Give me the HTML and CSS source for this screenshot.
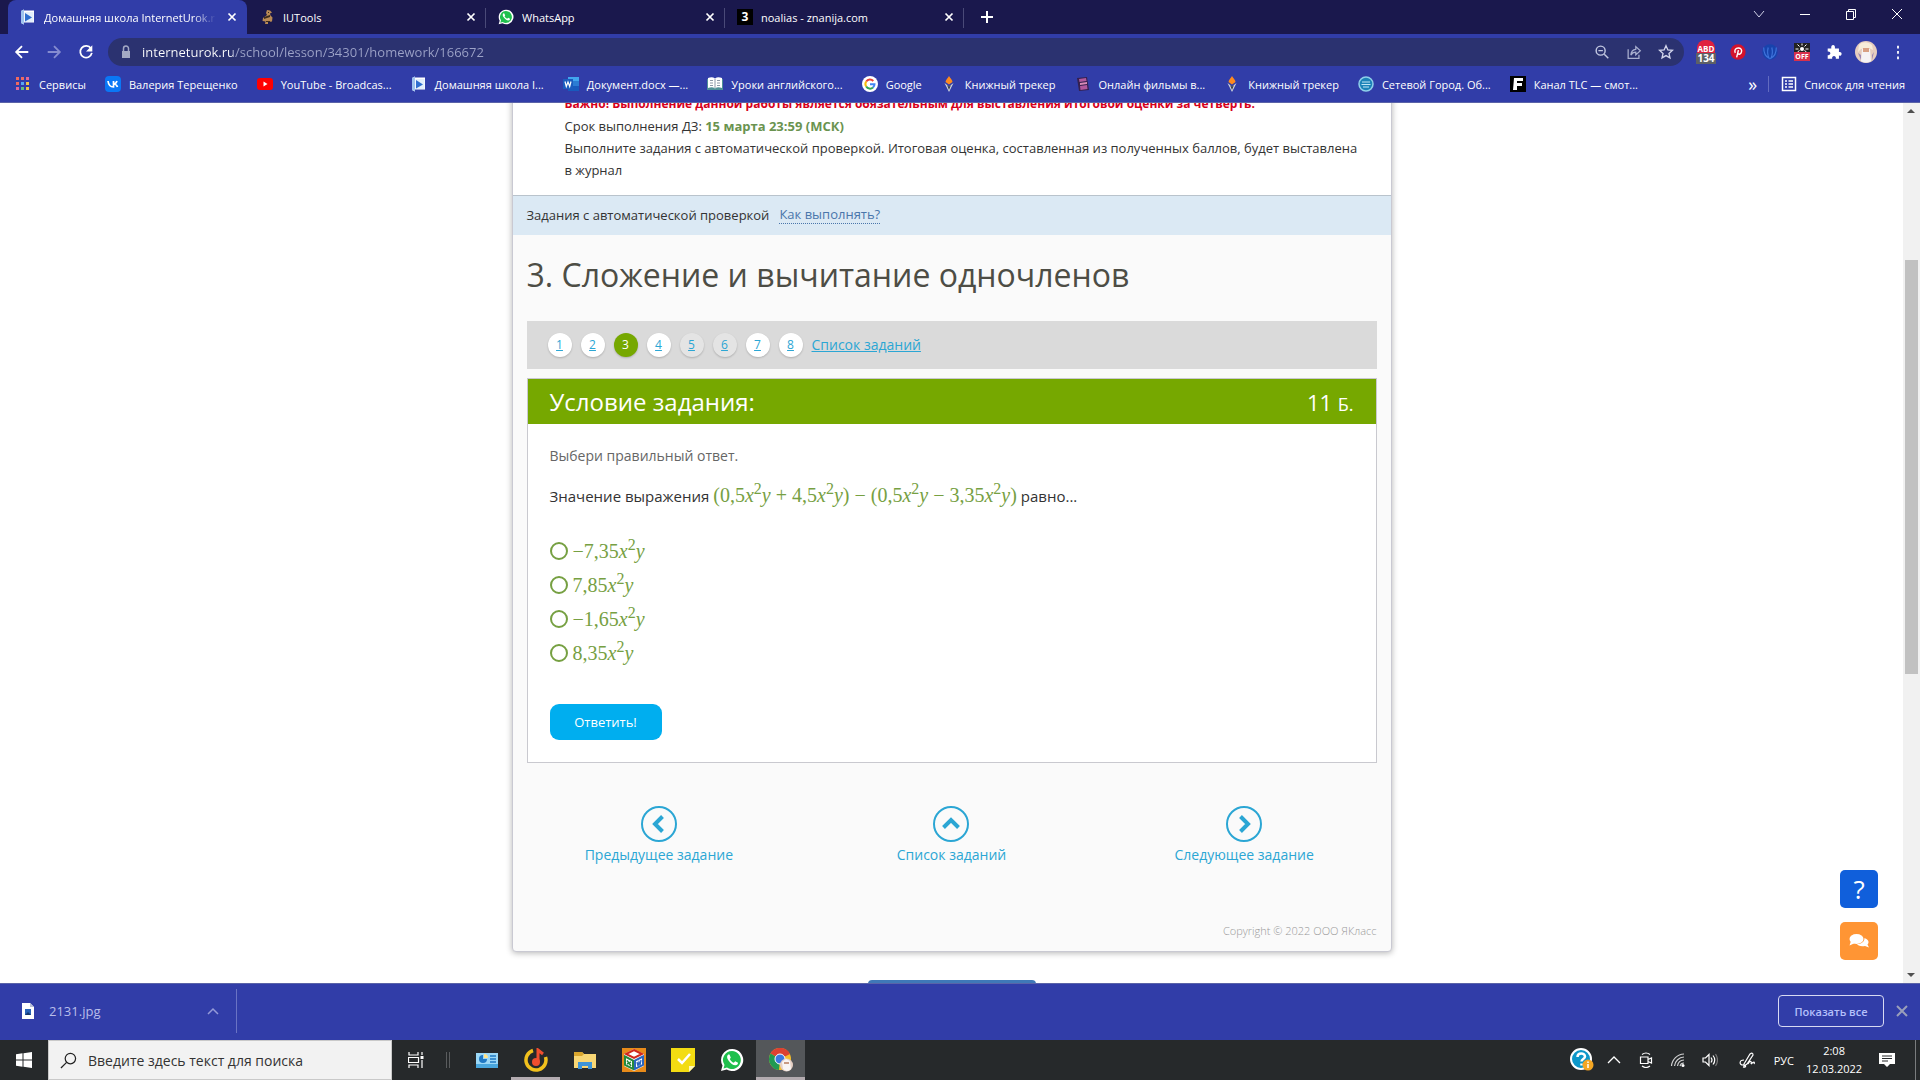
FILE: index.html
```html
<!DOCTYPE html>
<html lang="ru">
<head>
    <meta charset="UTF-8">
    <meta name="viewport" content="width=device-width, initial-scale=1.0">
    <title>Домашняя школа InternetUrok.ru</title>
    <link rel="stylesheet" href="styles.css">
</head>
<body>

    <!-- shared icons -->
    <svg class="sprite" aria-hidden="true">
        <symbol id="i-school" viewBox="0 0 16 16"><path d="M1 2l3-1.500v1h10v12H4v2l-3-1.500z" fill="#fff"/><path d="M4.500 3h9v10h-9z" fill="#e3eefb"/><path d="M5 4l7 4.500L5 12.500z" fill="#2f6fd0"/><path d="M1 2l3-1.500v15L1 14z" fill="#9fc3ee"/></symbol>
        <symbol id="i-x" viewBox="0 0 16 16"><path d="M4.500 4.500l7 7m0-7l-7 7" stroke="currentColor" stroke-width="1.700" fill="none"/></symbol>
        <symbol id="i-wa" viewBox="0 0 24 24"><path d="M12 1a11 11 0 0 0-9.500 16.500L1 23l5.700-1.500A11 11 0 1 0 12 1z" fill="#fff"/><path d="M12 3a9 9 0 0 0-7.500 14l-1 3.500L7 19.600A9 9 0 1 0 12 3z" fill="#1fc04d"/><path d="M8.200 6.500c-1.600 1.300-1.500 3.600.3 6 2.100 2.900 4.300 4.700 7 4.800 1.500 0 2.600-1.100 2.500-2.500l-2.800-1.500-1.400 1.500c-1.800-.7-3.200-2-4-3.800l1-1.300-1.300-3.100z" fill="#fff"/></symbol>
        <symbol id="i-torch" viewBox="0 0 16 16"><path d="M8 0c1 2 3.500 4 3.500 6L8 8.500 4.500 6C4.500 4 7 2 8 0z" fill="#ff8a1e"/><path d="M3.500 7L8 10.500 12.500 7 8 16z" fill="#cfd4dc"/><path d="M6 9l2 1.500L10 9l-2 5z" fill="#3a3f4c"/></symbol>
    </svg>

    <header class="browser">
        <div class="tabs">
            <div class="tab active">
                <svg class="ico"><use href="#i-school"/></svg>
                <span class="tab-title">Домашняя школа InternetUrok.r</span>
                <button class="tab-close" aria-label="Закрыть"><svg class="ico"><use href="#i-x"/></svg></button>
            </div>
            <div class="tab">
                <svg class="ico" viewBox="0 0 16 16"><path d="M8 1l3 .500 2 2-2 1 .500 2 2 2-.500 4-4 .500V15H6l.500-2.500-3-.500.500-3 4-3L7 4z" fill="#b98a55"/><path d="M5 8l6-2v2L5 10zm2 4h4v1H7zM9 3h1v1H9z" fill="#3c2b1c"/></svg>
                <span class="tab-title">IUTools</span>
                <button class="tab-close" aria-label="Закрыть"><svg class="ico"><use href="#i-x"/></svg></button>
            </div>
            <div class="tab">
                <svg class="ico"><use href="#i-wa"/></svg>
                <span class="tab-title">WhatsApp</span>
                <button class="tab-close" aria-label="Закрыть"><svg class="ico"><use href="#i-x"/></svg></button>
            </div>
            <div class="tab">
                <span class="ico znanija">3</span>
                <span class="tab-title">noalias - znanija.com</span>
                <button class="tab-close" aria-label="Закрыть"><svg class="ico"><use href="#i-x"/></svg></button>
            </div>
            <button class="new-tab" aria-label="Новая вкладка"><svg class="ico" viewBox="0 0 16 16"><path d="M8 2v12M2 8h12" stroke="#fff" stroke-width="2"/></svg></button>
            <div class="window-buttons">
                <button aria-label="Поиск вкладок"><svg class="ico" viewBox="0 0 16 16"><path d="M3 5l5 6 5-6" fill="none" stroke="#cfd0e6"/></svg></button>
                <button aria-label="Свернуть"><svg class="ico" viewBox="0 0 16 16"><path d="M3 8.500h10" stroke="#fff"/></svg></button>
                <button aria-label="Развернуть"><svg class="ico" viewBox="0 0 16 16"><path d="M3.500 5.500h7v8h-7zM5.500 5.500v-2h7v8h-2" fill="none" stroke="#fff"/></svg></button>
                <button aria-label="Закрыть окно"><svg class="ico" viewBox="0 0 16 16"><path d="M3 3l10 10m0-10L3 13" stroke="#fff" fill="none"/></svg></button>
            </div>
        </div>

        <div class="toolbar">
            <button class="tool" aria-label="Назад"><svg viewBox="0 0 20 20"><path d="M17 10H4m6-6.500L3.500 10l6.500 6.500" fill="none" stroke="#fff" stroke-width="2"/></svg></button>
            <button class="tool" aria-label="Вперёд"><svg viewBox="0 0 20 20"><path d="M3 10h13m-6-6.500l6.500 6.500-6.500 6.500" fill="none" stroke="#858cd0" stroke-width="2"/></svg></button>
            <button class="tool" aria-label="Обновить"><svg viewBox="0 0 20 20"><path d="M15.500 6A6.500 6.500 0 1 0 16.500 11" fill="none" stroke="#fff" stroke-width="2"/><path d="M17 2.500v7h-7z" fill="#fff"/></svg></button>
            <div class="omnibox">
                <svg class="ico lock" viewBox="0 0 16 16"><path d="M4 7h8v7H4z" fill="#a3a9c4"/><path d="M5.500 7V4.500a2.500 2.500 0 0 1 5 0V7" fill="none" stroke="#a3a9c4" stroke-width="1.500"/></svg>
                <input type="text" class="url" aria-label="Адрес" value="interneturok.ru/school/lesson/34301/homework/166672">
                <button class="tool" aria-label="Масштаб"><svg viewBox="0 0 20 20"><circle cx="8.500" cy="8.500" r="5" fill="none" stroke="#c3c8e2" stroke-width="1.600"/><path d="M12.500 12.500L17 17M6 8.500h5" stroke="#c3c8e2" stroke-width="1.600"/></svg></button>
                <button class="tool" aria-label="Поделиться"><svg viewBox="0 0 20 20"><path d="M3.500 7v10h12v-4" fill="none" stroke="#a9afcf" stroke-width="1.400"/><path d="M6.500 13.500c.3-4 2.500-6.200 5.500-6.500V4l5 4.700-5 4.500v-3c-2.500 0-4.300 1-5.500 3.300z" fill="none" stroke="#a9afcf" stroke-width="1.400"/></svg></button>
                <button class="tool" aria-label="В закладки"><svg viewBox="0 0 20 20"><path d="M10 3l2.100 4.700 5 .5-3.800 3.400 1.100 5L10 14l-4.400 2.600 1.100-5-3.800-3.400 5-.5z" fill="none" stroke="#d3d6ec" stroke-width="1.500"/></svg></button>
            </div>
            <div class="extensions">
                <button class="tool abd" aria-label="Блокировщик"><span>ABD</span><b>134</b></button>
                <button class="tool" aria-label="Pinterest"><svg viewBox="0 0 20 20"><circle cx="10" cy="10" r="8.500" fill="#d3122b"/><path d="M8.500 16l2-8M7 11C5.500 8 7.500 5.500 10.300 5.500s4.200 2 3.600 4.400c-.6 2.500-2.900 3.100-4.100 1.800" fill="none" stroke="#fff" stroke-width="1.600"/></svg></button>
                <button class="tool" aria-label="VPN"><svg viewBox="0 0 20 20"><circle cx="10" cy="10" r="8.500" fill="#1743ad"/><path d="M3 5c0 6 2 10 6 12-2-4-2-8-1-12M17 5c0 6-2 10-6 12 2-4 2-8 1-12" fill="none" stroke="#3f74dc" stroke-width="1.300"/></svg></button>
                <button class="tool sun-off" aria-label="Тёмный режим"><svg viewBox="0 0 16 9"><path d="M8 .500v2M3.500 1.500l2 2m7-2l-2 2M1.500 6h3m7 0h3M3.500 9l2-1.500m7 1.500l-2-1.500" stroke="#fff"/><circle cx="8" cy="6" r="2" fill="#fff"/></svg><b>OFF</b></button>
                <button class="tool" aria-label="Расширения"><svg viewBox="0 0 20 20"><path d="M3 6h4c-1-5 5-5 4 0h4.500v4c4-1 4 5 0 4v3.500H12c1-4-5-4-4 0H3v-4c4 .500 4-4.500 0-4z" fill="#fff"/></svg></button>
                <button class="tool" aria-label="Профиль"><svg class="avatar" viewBox="0 0 22 22"><circle cx="11" cy="11" r="11" fill="#e6cdbf"/><path d="M4 4c4-4 9-3 13 0l1 5-4-2-8 1-3 3z" fill="#f7edd9"/><path d="M7 8h8l1 12c-3 2-7 2-10 0z" fill="#f5f2f4"/><path d="M8 7h6v4H8z" fill="#d8a083"/><path d="M3 12l3 2v5zm16-1l-2 3v5z" fill="#9a86b4"/></svg></button>
                <button class="tool" aria-label="Меню"><svg viewBox="0 0 20 20"><path d="M9 3h2v3H9zm0 6h2v3H9zm0 6h2v3H9z" fill="#fff"/></svg></button>
            </div>
        </div>

        <nav class="bookmarks">
            <a href="#"><svg class="ico" viewBox="0 0 16 16"><path d="M1 1h3v3H1zm5 0h3v3H6zM1 6h3v3H1z" fill="#f06a5e"/><path d="M11 1h3v3h-3zM1 11h3v3H1z" fill="#e2679a"/><path d="M6 6h3v3H6z" fill="#58a6f2"/><path d="M11 6h3v3h-3zm0 5h3v3h-3z" fill="#f2c14b"/><path d="M6 11h3v3H6z" fill="#5fbf7f"/></svg><span>Сервисы</span></a>
            <a href="#"><svg class="ico" viewBox="0 0 16 16"><rect width="16" height="16" rx="4" fill="#0a77f6"/><path d="M3 5c.5 4 2.500 6 5.500 6V5m0 3c2 0 3-1.500 3.500-3m-3.500 3c2 0 3.500 1.500 4 3" fill="none" stroke="#fff" stroke-width="1.700"/></svg><span>Валерия Терещенко</span></a>
            <a href="#"><svg class="ico" viewBox="0 0 16 16"><rect y="2" width="16" height="12" rx="3" fill="#f00"/><path d="M6.500 5.500v5l4-2.500z" fill="#fff"/></svg><span>YouTube - Broadcas...</span></a>
            <a href="#"><svg class="ico"><use href="#i-school"/></svg><span>Домашняя школа I...</span></a>
            <a href="#"><svg class="ico" viewBox="0 0 16 16"><path d="M5 1h11v14H5z" fill="#41a5ee"/><path d="M5 5h11v5H5z" fill="#2b7cd3"/><path d="M5 10h11v5H5z" fill="#185abd"/><path d="M0 3h10v10H0z" fill="#1b5cbe"/><path d="M2 5.500l1.300 5L5 6l1.700 4.500L8 5.500" fill="none" stroke="#fff" stroke-width="1.200"/></svg><span>Документ.docx —...</span></a>
            <a href="#"><svg class="ico" viewBox="0 0 16 16"><path d="M0 3h16v11H0z" fill="#4f8f96"/><path d="M1 2c3-1 5-1 7 .500 2-1.500 4-1.500 7-.5v10c-3-1-5-1-7 .500-2-1.500-4-1.500-7-.5z" fill="#fff"/><path d="M8 3v9M3 4.500h3M3 7h3M3 9.500h3m4-5h3M10 7h3m-3 2.500h3" stroke="#8d99a8"/></svg><span>Уроки английского...</span></a>
            <a href="#"><svg class="ico" viewBox="0 0 16 16"><circle cx="8" cy="8" r="8" fill="#fff"/><g fill="none" stroke-width="2"><path d="M4.200 5.500A4.500 4.500 0 0 1 11.300 5" stroke="#ea4335"/><path d="M4.200 5.500a4.500 4.500 0 0 0 0 5" stroke="#fbbc05"/><path d="M4.200 10.500a4.500 4.500 0 0 0 6.800 1" stroke="#34a853"/><path d="M11 11.500a4.500 4.500 0 0 0 1.500-3.300H8" stroke="#4285f4"/></g></svg><span>Google</span></a>
            <a href="#"><svg class="ico"><use href="#i-torch"/></svg><span>Книжный трекер</span></a>
            <a href="#"><svg class="ico" viewBox="0 0 16 16"><path d="M2 2l10-1 2 13-10 1z" fill="#35204f"/><path d="M4 3l7-1 .500 3-7 1zm1 7l7-1 .500 4-7 1z" fill="#b0589d"/><path d="M5 7l7-1v2l-7 1z" fill="#d98bb7"/></svg><span>Онлайн фильмы в...</span></a>
            <a href="#"><svg class="ico"><use href="#i-torch"/></svg><span>Книжный трекер</span></a>
            <a href="#"><svg class="ico" viewBox="0 0 16 16"><circle cx="8" cy="8" r="7" fill="#1c83b8" stroke="#8fd0ea" stroke-width="1.500"/><path d="M4 6h8M3.500 8.500h9M5 11h6" stroke="#bfe6f5"/></svg><span>Сетевой Город. Об...</span></a>
            <a href="#"><svg class="ico" viewBox="0 0 16 16"><path d="M0 0h16v16H0z" fill="#000"/><path d="M4 2h9v3H7v2h5v3H7v4H3z" fill="#fff"/></svg><span>Канал TLC — смот...</span></a>
            <button class="more" aria-label="Ещё">»</button>
            <a href="#" class="reading"><svg class="ico" viewBox="0 0 16 16"><rect x="1.500" y="1.500" width="13" height="13" fill="none" stroke="#fff" stroke-width="1.500"/><path d="M4 5h2m1.500 0H12M4 8h2m1.500 0H12M4 11h2m1.500 0H12" stroke="#fff" stroke-width="1.500"/></svg><span>Список для чтения</span></a>
        </nav>
    </header>

    <main class="viewport">
        <div class="page">
            <article class="card">
                <div class="intro">
                    <p class="important">Важно! Выполнение данной работы является обязательным для выставления итоговой оценки за четверть.</p>
                    <p>Срок выполнения ДЗ: <b>15 марта 23:59 (МСК)</b></p>
                    <p>Выполните задания с автоматической проверкой. Итоговая оценка, составленная из полученных баллов, будет выставлена в&nbsp;журнал</p>
                </div>
                <div class="auto-check">
                    <span>Задания с автоматической проверкой</span>
                    <a href="#">Как выполнять?</a>
                </div>

                <div class="lesson">
                    <h1>3. Сложение и вычитание одночленов</h1>
                    <nav class="steps">
                        <a href="#">1</a>
                        <a href="#">2</a>
                        <a href="#" class="current">3</a>
                        <a href="#">4</a>
                        <a href="#" class="done">5</a>
                        <a href="#" class="done">6</a>
                        <a href="#">7</a>
                        <a href="#">8</a>
                        <a href="#" class="all">Список заданий</a>
                    </nav>

                    <section class="task">
                        <div class="task-head">
                            <h2>Условие задания:</h2>
                            <span>11 <small>Б.</small></span>
                        </div>
                        <form class="task-body" onsubmit="return false">
                            <p class="hint">Выбери правильный ответ.</p>
                            <p class="question">Значение выражения <span class="math">(0,5<i>x</i><sup>2</sup><i>y</i> + 4,5<i>x</i><sup>2</sup><i>y</i>) − (0,5<i>x</i><sup>2</sup><i>y</i> − 3,35<i>x</i><sup>2</sup><i>y</i>)</span> равно...</p>
                            <div class="answers">
                                <label><input type="radio" name="answer"><span class="math">−7,35<i>x</i><sup>2</sup><i>y</i></span></label>
                                <label><input type="radio" name="answer"><span class="math">7,85<i>x</i><sup>2</sup><i>y</i></span></label>
                                <label><input type="radio" name="answer"><span class="math">−1,65<i>x</i><sup>2</sup><i>y</i></span></label>
                                <label><input type="radio" name="answer"><span class="math">8,35<i>x</i><sup>2</sup><i>y</i></span></label>
                            </div>
                            <button class="submit" type="submit">Ответить!</button>
                        </form>
                    </section>
                </div>

                <nav class="pager">
                    <a href="#"><svg viewBox="0 0 36 36"><circle cx="18" cy="18" r="17" fill="none" stroke="#2ba6d4" stroke-width="2"/><path d="M21.500 10.500L14 18l7.500 7.500" fill="none" stroke="#2ba6d4" stroke-width="4"/></svg>Предыдущее задание</a>
                    <a href="#"><svg viewBox="0 0 36 36"><circle cx="18" cy="18" r="17" fill="none" stroke="#2ba6d4" stroke-width="2"/><path d="M10.500 21.500L18 14l7.500 7.500" fill="none" stroke="#2ba6d4" stroke-width="4"/></svg>Список заданий</a>
                    <a href="#"><svg viewBox="0 0 36 36"><circle cx="18" cy="18" r="17" fill="none" stroke="#2ba6d4" stroke-width="2"/><path d="M14.500 10.500L22 18l-7.500 7.500" fill="none" stroke="#2ba6d4" stroke-width="4"/></svg>Следующее задание</a>
                </nav>
                <footer class="copyright">Copyright © 2022 ООО ЯКласс</footer>
            </article>
            <div class="next-button"></div>

            <div class="float-buttons">
                <button class="help" aria-label="Помощь">?</button>
                <button class="chat" aria-label="Чат"><svg viewBox="0 0 20 16"><ellipse cx="7.500" cy="6" rx="7" ry="5" fill="#fff"/><path d="M2 8l-1.500 4.500L6 10z" fill="#fff"/><path d="M15.500 5c5 2 4.500 5 3 6.500l1.500 3-4-1.500c-4 1-7.500-.500-8-2 4 0 7.500-2 7.500-6z" fill="#fff"/></svg></button>
            </div>
        </div>
        <div class="scrollbar">
            <svg viewBox="0 0 16 16"><path d="M4 10l4-4 4 4z" fill="#505050"/></svg>
            <div class="thumb"></div>
            <svg viewBox="0 0 16 16"><path d="M4 6l4 4 4-4z" fill="#505050"/></svg>
        </div>
    </main>

    <div class="downloads">
        <div class="file">
            <svg class="ico" viewBox="0 0 16 16"><path d="M2 0h8l4 4v12H2z" fill="#fff"/><path d="M10 0l4 4h-4z" fill="#b8bfd6"/><path d="M5 6h6v6H5z" fill="#2a64b8"/><path d="M5 12l3-3 3 3z" fill="#17386e"/></svg>
            <span>2131.jpg</span>
            <button aria-label="Действия"><svg class="ico" viewBox="0 0 16 16"><path d="M3 11l5-5 5 5" fill="none" stroke="#959bd8" stroke-width="1.500"/></svg></button>
        </div>
        <button class="show-all">Показать все</button>
        <button class="close-bar" aria-label="Закрыть"><svg class="ico" viewBox="0 0 16 16"><path d="M3 3l10 10m0-10L3 13" stroke="#9a9fba" stroke-width="2"/></svg></button>
    </div>

    <footer class="taskbar">
        <button class="start" aria-label="Пуск"><svg class="ico" viewBox="0 0 16 16"><path d="M0 2.200l6.500-.9v6.200H0zm7.500-1L16 0v7.500H7.500zM0 8.500h6.500v6.200L0 13.800zm7.500 0H16V16l-8.500-1.200z" fill="#fff"/></svg></button>
        <label class="search">
            <svg viewBox="0 0 18 18"><circle cx="11" cy="7" r="5.500" fill="none" stroke="#222" stroke-width="1.300"/><path d="M7 11l-6 6" stroke="#222" stroke-width="1.300"/></svg>
            <input type="text" placeholder="Введите здесь текст для поиска" aria-label="Поиск">
        </label>
        <button class="view" aria-label="Представление задач"><svg class="ico" viewBox="0 0 16 16"><path d="M1 0v3h9V0M1 16v-3h9v3M.500 5.500h10v5H.500zM14 0v3m0 5v8" fill="none" stroke="#fff" stroke-width="1.200"/><path d="M12.500 4h3v3h-3z" fill="#fff"/></svg></button>
        <span class="grip"></span>
        <div class="apps">
            <button aria-label="Панель управления"><svg viewBox="0 0 24 24"><path d="M1 5h22v15H1z" fill="#9bd8f7"/><path d="M1 16h22v4H1z" fill="#4aa7de"/><path d="M8 7v4h4a4 4 0 1 1-4-4z" fill="#1f78c4"/><path d="M9 6a4 4 0 0 1 4 4H9z" fill="#ffe38a"/><path d="M15 8h6m-6 3h6m-6 3h6" stroke="#1f78c4" stroke-width="1.500"/></svg></button>
            <button class="running" aria-label="Музыка"><svg viewBox="0 0 24 24"><path d="M9 2.500A10 10 0 1 0 21.500 9" fill="none" stroke="#f2c11d" stroke-width="3.500"/><circle cx="12" cy="14" r="4" fill="#f04e2f"/><path d="M14 14V2l5 4" fill="none" stroke="#f04e2f" stroke-width="3"/></svg></button>
            <button aria-label="Проводник"><svg viewBox="0 0 24 24"><path d="M1 4h8l2 2h12v14H1z" fill="#f8d775"/><path d="M1 4h8l2 2-2 2H1z" fill="#d9a62e"/><path d="M5 21v-7h14v7h-4v-3H9v3z" fill="#3d94d8"/></svg></button>
            <button aria-label="Office"><svg viewBox="0 0 24 24"><path d="M0 0h24v24H0z" fill="#e88b1a"/><path d="M12 1l10 5v12l-10 5-10-5V6z" fill="#fff"/><path d="M12 2l8 4-8 4-8-4z" fill="#fff" stroke="#d0281c" stroke-width="2"/><path d="M3 8.500l8 4v8.500l-8-4z" fill="#fff" stroke="#258a3c" stroke-width="2"/><path d="M21 8.500l-8 4v8.500l8-4z" fill="#fff" stroke="#2a66c0" stroke-width="2"/><path d="M5 12.500l4 5.500m0-4l-4 2" stroke="#258a3c" stroke-width="1.500"/><path d="M15 14l1 4 1-4 1 3 1-5" fill="none" stroke="#2a66c0" stroke-width="1.300"/></svg></button>
            <button aria-label="Заметки"><svg viewBox="0 0 24 24"><path d="M0 0h24v18l-6 6H0z" fill="#f3dc12"/><path d="M18 24v-6h6z" fill="#fff7b8"/><path d="M7 11l4 4 8-9" fill="none" stroke="#fff" stroke-width="2.500"/></svg></button>
            <button aria-label="WhatsApp"><svg><use href="#i-wa"/></svg></button>
            <button class="running focused" aria-label="Chrome"><svg viewBox="0 0 24 24"><circle cx="11" cy="11" r="11" fill="#f4bd2c"/><path d="M11 11L1.500 5.500A11 11 0 0 1 21 6z" fill="#dc4132"/><path d="M11 11L1.500 5.500A11 11 0 0 0 10 22z" fill="#1f9a52"/><circle cx="11" cy="11" r="5" fill="#3b78e0" stroke="#fff"/><circle cx="17.500" cy="17" r="6.500" fill="#e5cfc4"/><path d="M13 14l4-3 4 2 1 8c-3 3-6 2-8 0z" fill="#f8f5f3"/><path d="M15 14h5v2h-5z" fill="#c99a82"/></svg></button>
        </div>
        <div class="tray">
            <svg class="help-ico" viewBox="0 0 24 24"><circle cx="11" cy="11" r="10" fill="#0d97c9" stroke="#fff" stroke-width="2"/><path d="M7.500 9c0-5 7.500-4.500 7.500-.5 0 2.500-3.500 2.500-3.500 5m0 2v2" fill="none" stroke="#fff" stroke-width="2.500"/><circle cx="18" cy="17" r="5.500" fill="#f5a623"/><path d="M18 13.500v1.500m0 1v4" stroke="#fff" stroke-width="1.500"/></svg>
            <svg viewBox="0 0 16 16"><path d="M2 11l6-6 6 6" fill="none" stroke="#fff" stroke-width="1.300"/></svg>
            <svg viewBox="0 0 16 16"><path d="M2.500 5h7.500v6.500H2.500zM10 7.500l3.500-1.500v5L10 9.500M4 2.500q4-3 8 0m-8 11.500q4 3 8 0" fill="none" stroke="#fff" stroke-width="1.200"/></svg>
            <svg viewBox="0 0 16 16"><g fill="none" stroke="#cfd0d1" stroke-width="1.200"><path d="M1.500 14A13 13 0 0 1 14 2"/><path d="M4.500 14A10 10 0 0 1 14 5"/><path d="M7.500 14A7 7 0 0 1 14 8"/><path d="M10 14a4 4 0 0 1 4-3"/></g><circle cx="13" cy="13.500" r="1.500" fill="#fff"/></svg>
            <svg viewBox="0 0 16 16"><path d="M1 6h2.500L7 2.500v11L3.500 10H1zM9 5.500q2 2.500 0 5m2-7q3.500 4.500 0 9" fill="none" stroke="#fff" stroke-width="1.200"/><path d="M13.500 2q4 6 0 12" fill="none" stroke="#777" stroke-width="1.200"/></svg>
            <svg class="pen" viewBox="0 0 16 16"><path d="M5 12L11 2q3-2 3 1L8 12l-3 2zM5 8c-5 0-5 5-1 5 4 0 3 3 0 2m5-3c2-4 4-3 3 0 3-3 4-2 3 0" fill="none" stroke="#fff" stroke-width="1.200"/></svg>
            <span class="lang">РУС</span>
            <time class="clock"><span>2:08</span><span>12.03.2022</span></time>
            <svg class="note" viewBox="0 0 16 16"><path d="M0 1h16v11h-5l-3 3-3-3H0z" fill="#fff"/><path d="M3 4h10M3 6.500h10M3 9h6" stroke="#26292b"/></svg>
            <span class="peek"></span>
        </div>
    </footer>

</body>
</html>
```
FILE: styles.css
```css
* {
    box-sizing: border-box;
}

body {
    margin: 0;
    height: 100vh;
    display: flex;
    flex-direction: column;
    overflow: hidden;
    font-family: "Open Sans", sans-serif;
    font-size: 11px;
    background: #fff;
}

button {
    padding: 0;
    border: none;
    background: none;
    color: inherit;
    font-family: inherit;
    cursor: pointer;
}

svg {
    display: block;
    flex: none;
}

p, h1, h2 {
    margin: 0;
    font-weight: normal;
}

.sprite {
    display: none;
}

.ico {
    width: 16px;
    height: 16px;
    flex: none;
}

/* browser header */
.browser {
    flex: none;
    background: #313da8;
    color: #fff;
    border-bottom: 1px solid #5a63a8;
}

.tabs {
    display: flex;
    align-items: center;
    height: 34px;
    padding-left: 8px;
    background: #1a184d;
}

.tab {
    display: flex;
    align-items: center;
    gap: 8px;
    width: 239px;
    height: 34px;
    padding: 0 7px 0 12px;
    position: relative;
}

.tab.active {
    background: #313da8;
    border-radius: 8px 8px 0 0;
}

.tab:not(.active)::after {
    content: "";
    position: absolute;
    right: 0;
    top: 8px;
    height: 20px;
    border-right: 1px solid #4a4a78;
}

.tab-title {
    flex: 1;
    overflow: hidden;
    white-space: nowrap;
}

.active .tab-title {
    -webkit-mask-image: linear-gradient(to left, transparent, #000 24px);
    mask-image: linear-gradient(to left, transparent, #000 24px);
}

.znanija {
    background: #000;
    font-size: 12px;
    font-weight: bold;
    line-height: 16px;
    text-align: center;
}

.new-tab {
    margin-left: 15px;
}

.window-buttons {
    display: flex;
    align-self: flex-start;
    margin-left: auto;
}

.window-buttons button {
    display: grid;
    place-items: center;
    width: 46px;
    height: 28px;
}

.toolbar {
    display: flex;
    align-items: center;
    height: 36px;
    padding: 0 6px;
}

.tool {
    display: grid;
    place-items: center;
    flex: none;
    width: 32px;
    height: 28px;
}

.tool svg {
    width: 18px;
    height: 18px;
}

.omnibox {
    flex: 1;
    display: flex;
    align-items: center;
    height: 28px;
    margin: 0 6px;
    padding: 0 2px 0 10px;
    border-radius: 14px;
    background: #2b3270;
}

.url {
    flex: 1;
    min-width: 0;
    padding: 0;
    margin-left: 8px;
    border: none;
    outline: none;
    font: 13px "Open Sans", sans-serif;
    color: transparent;
    /* host is bright, path is dimmed */
    background: linear-gradient(to right, #fff 91px, #9da3c8 91px);
    -webkit-background-clip: text;
    background-clip: text;
}

.extensions {
    display: flex;
}

.abd,
.sun-off {
    align-content: center;
    font-size: 9px;
    line-height: 9px;
}

.abd span {
    width: 18px;
    padding-top: 4px;
    border-radius: 8px 8px 0 0;
    background: #e0213f;
    font-size: 8px;
    font-weight: bold;
}

.abd b {
    width: 20px;
    background: #5d6066;
    font-size: 10px;
    line-height: 11px;
}

.sun-off svg {
    width: 16px;
    height: 9px;
    background: #222;
}

.sun-off b {
    width: 16px;
    background: #d8304c;
    font-size: 7px;
}

.tool .avatar {
    width: 22px;
    height: 22px;
}

.bookmarks {
    display: flex;
    align-items: center;
    gap: 19px;
    height: 32px;
    padding: 0 15px 4px;
}

.bookmarks a {
    display: flex;
    align-items: center;
    gap: 8px;
    flex: none;
    color: #fff;
    text-decoration: none;
    white-space: nowrap;
}

.more {
    margin-left: auto;
    font-size: 18px;
}

.bookmarks .reading {
    gap: 7px;
    margin-left: -8px;
    padding-left: 12px;
    border-left: 1px solid #626bc0;
}

/* web page */
.viewport {
    flex: 1;
    display: flex;
    min-height: 0;
    overflow: hidden;
}

.page {
    flex: 1;
    position: relative;
    overflow: hidden;
}

.card {
    max-width: 880px;
    margin: -25px auto 28px;
    border: 1px solid #c9c9d2;
    border-radius: 4px;
    background: #fafafa;
    box-shadow: 0 1px 6px rgba(0, 0, 0, 0.3);
    color: #333;
}

.intro {
    padding: 14px 20px 14px 52px;
    background: #fff;
    font-size: 13px;
    line-height: 22px;
}

.important {
    color: #d6001c;
    font-size: 12px;
    font-weight: bold;
}

.intro b {
    color: #6a9350;
}

.auto-check {
    display: flex;
    align-items: center;
    gap: 10px;
    height: 40px;
    padding: 0 14px 2px;
    border-top: 1px solid #b9c3cc;
    background: #dbe9f4;
    font-size: 13px;
}

.auto-check a {
    color: #4a76ab;
    text-decoration: none;
    border-bottom: 1px dotted #4a76ab;
}

.lesson {
    padding: 17px 14px 0;
}

h1 {
    font-size: 32px;
    line-height: 46px;
    color: #4d4d45;
}

.steps {
    display: flex;
    align-items: center;
    gap: 9px;
    height: 48px;
    margin: 23px 0 9px;
    padding: 0 21px;
    background: #dadada;
}

.steps a {
    width: 24px;
    height: 24px;
    border-radius: 12px;
    background: #fff;
    box-shadow: 0 1px 2px rgba(0, 0, 0, 0.2);
    color: #2ba6d4;
    font-size: 12px;
    line-height: 24px;
    text-align: center;
}

.steps .current {
    background: #76a800;
    color: #fff;
    text-decoration: none;
}

.steps .done {
    background: #e4e4e4;
}

.steps .all {
    width: auto;
    background: none;
    box-shadow: none;
    font-size: 14px;
}

.task {
    border: 1px solid #c9c9cf;
    background: #fff;
}

.task-head {
    display: flex;
    align-items: center;
    justify-content: space-between;
    height: 45px;
    padding: 0 22px;
    background: #76a800;
    color: #fff;
    font-size: 22px;
}

h2 {
    font-size: 24px;
}

.task-head small {
    font-size: 18px;
}

.task-body {
    padding: 20px 22px 22px;
    font-size: 14px;
    line-height: 24px;
}

.hint {
    color: #666;
}

.question {
    margin-top: 14px;
    font-size: 15px;
    line-height: 26px;
}

.math {
    color: #76a042;
    font: 20px/26px "Liberation Serif", serif;
}

.math sup {
    font-size: 16px;
    line-height: 0;
}

.answers {
    display: grid;
    gap: 8px;
    margin: 29px 0 38px;
}

.answers label {
    display: flex;
    align-items: center;
    gap: 5px;
}

.answers input {
    appearance: none;
    width: 18px;
    height: 18px;
    margin: 0;
    border: 2px solid #76a042;
    border-radius: 50%;
}

.answers input:checked {
    background: radial-gradient(#76a042 5px, transparent 6px);
}

.submit {
    display: block;
    width: 112px;
    height: 36px;
    border-radius: 9px;
    background: #00aeef;
    color: #fff;
    font-size: 13px;
}

.pager {
    display: grid;
    grid-template-columns: repeat(3, 1fr);
    margin-top: 43px;
}

.pager a {
    display: flex;
    flex-direction: column;
    align-items: center;
    gap: 3px;
    color: #2ba6d4;
    font-size: 14px;
    line-height: 20px;
    text-decoration: none;
}

.pager svg {
    width: 36px;
    height: 36px;
}

.copyright {
    margin-top: 57px;
    padding: 0 14px 11px;
    color: #999;
    font-size: 11px;
    font-weight: 300;
    line-height: 18px;
    text-align: right;
}

.next-button {
    width: 168px;
    height: 40px;
    margin: 0 auto;
    border-radius: 4px;
    background: #3f78b8;
}

.float-buttons {
    position: absolute;
    right: 25px;
    bottom: 23px;
    display: grid;
    gap: 14px;
}

.float-buttons button {
    display: grid;
    place-items: center;
    width: 38px;
    height: 38px;
    border-radius: 5px;
    color: #fff;
    font-size: 26px;
    line-height: 36px;
}

.help {
    background: #105fdb;
}

.chat {
    background: #ff9534;
}

.chat svg {
    width: 20px;
    height: 16px;
}

.scrollbar {
    display: flex;
    flex-direction: column;
    width: 17px;
    background: #f1f1f1;
}

.scrollbar svg {
    width: 16px;
    height: 16px;
}

.scrollbar .thumb {
    height: 47%;
    margin: 141px 2px auto;
    background: #c1c1c1;
}

/* downloads bar */
.downloads {
    flex: none;
    display: flex;
    align-items: center;
    height: 57px;
    padding: 0 10px 2px 0;
    background: #313da8;
    border-top: 1px solid #5a63a8;
}

.file {
    display: flex;
    align-items: center;
    width: 237px;
    height: 44px;
    padding: 0 15px 0 20px;
    border-right: 1px solid #6a73c4;
    color: #b9beea;
    font-size: 13px;
}

.file span {
    flex: 1;
    margin-left: 13px;
}

.show-all {
    width: 106px;
    height: 32px;
    margin-left: auto;
    border: 1px solid #d7daf3;
    border-radius: 4px;
    color: #b5c0fb;
    font-size: 11px;
    font-weight: 600;
}

.close-bar {
    margin-left: 10px;
}

/* taskbar */
.taskbar {
    flex: none;
    display: flex;
    height: 40px;
    background: #26292b;
    color: #fff;
}

.taskbar > button,
.apps button {
    display: grid;
    place-items: center;
}

.start {
    width: 48px;
}

.search {
    display: flex;
    align-items: center;
    gap: 11px;
    width: 344px;
    padding-left: 11px;
    background: #f2f2f2;
    border: 1px solid #c9c9c9;
}

.search svg {
    width: 17px;
    height: 17px;
}

.search input {
    flex: 1;
    min-width: 0;
    padding: 0;
    border: none;
    outline: none;
    background: none;
    font: 14px "Open Sans", sans-serif;
}

.search input::placeholder {
    color: #333;
}

.view {
    width: 48px;
}

.grip {
    width: 4px;
    height: 16px;
    margin: 12px 12px 0 6px;
    border: 1px solid #5a5c5e;
    border-width: 0 1px;
}

.apps {
    display: flex;
}

.apps button {
    width: 49px;
    border-bottom: 3px solid transparent;
    padding-top: 3px;
}

.apps svg {
    width: 24px;
    height: 24px;
}

.apps .running {
    border-bottom-color: #b3abb0;
}

.apps .focused {
    background: #54575a;
}

.tray {
    display: flex;
    align-items: center;
    gap: 16px;
    margin-left: auto;
}

.tray svg {
    width: 16px;
    height: 16px;
}

.tray .help-ico {
    width: 24px;
    height: 24px;
    margin-right: -4px;
}

.tray .pen {
    margin-left: 5px;
}

.lang {
    margin-left: 3px;
}

.clock {
    display: grid;
    width: 56px;
    margin: 0 1px 0 -4px;
    line-height: 18px;
    text-align: center;
}

.peek {
    width: 5px;
    height: 40px;
    margin-left: 4px;
    border-left: 1px solid #7a7c7e;
}
```
